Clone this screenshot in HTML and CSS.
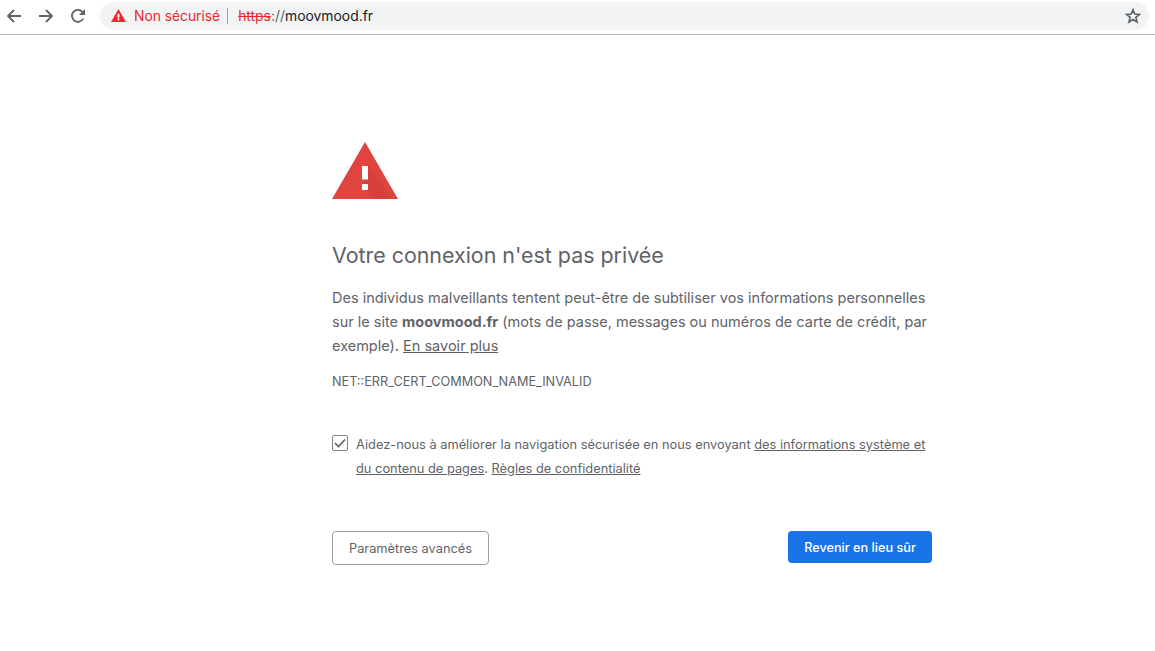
FILE: index.html
```html
<!DOCTYPE html>
<html lang="fr">
  <head>
    <meta charset="UTF-8" />
    <title>Erreur de confidentialité</title>
    <link rel="stylesheet" href="styles.css">
  </head>
  <body>
    <header class="toolbar">
      <button class="nav-btn" type="button" aria-label="Retour">
        <svg width="16" height="16" viewBox="0 0 16 16"><path d="M15 8H2M8 2 2 8l6 6" /></svg>
      </button>
      <button class="nav-btn" type="button" aria-label="Suivant">
        <svg width="16" height="16" viewBox="0 0 16 16"><path d="M1 8h13M8 2l6 6-6 6" /></svg>
      </button>
      <button class="nav-btn" type="button" aria-label="Actualiser">
        <svg width="16" height="16" viewBox="0 0 16 16"><path d="M13.2 10.6A6 6 0 1 1 12.4 3.8L14 5.4" /><path class="fill" d="M15 1v6H9z" /></svg>
      </button>
      <div class="omnibox">
        <svg class="warn-small" width="15" height="13" viewBox="0 0 16 14"><path d="M8 0 16 14H0z" fill="#e52b2b" /><path d="M7 5h2v4.400H7zM7 10.200h2v1.800H7z" fill="#fff" /></svg>
        <span class="not-secure">Non sécurisé</span>
        <span class="divider"></span>
        <span class="url"><s class="scheme">https</s><span class="sep">://</span>moovmood.fr</span>
        <svg class="star" width="16" height="16" viewBox="0 0 16 16"><path d="M8 1.800 9.800 6l4.600.4-3.500 3 1.100 4.500L8 11.500l-4 2.400 1.100-4.500-3.500-3L6.200 6z" /></svg>
      </div>
    </header>

    <main class="interstitial">
      <svg class="warn-big" width="66" height="58" viewBox="0 0 66 58">
        <path d="M33 0 66 57H0z" fill="#e0443e" />
        <path d="M36 22 59 57H44L31 45z" fill="#c93a35" opacity="0.4" />
        <path d="M30 24h6v13.500h-6zM30 42h6v6h-6z" fill="#fff" />
      </svg>

      <h1>Votre connexion n'est pas privée</h1>

      <p class="message">Des individus malveillants tentent peut-être de subtiliser vos informations personnelles sur le site <strong>moovmood.fr</strong> (mots de passe, messages ou numéros de carte de crédit, par exemple). <a href="#">En savoir plus</a></p>

      <div class="error-code">NET::ERR_CERT_COMMON_NAME_INVALID</div>

      <div class="opt-in">
        <span class="checkbox">
          <svg width="12" height="10" viewBox="0 0 12 10"><path d="M1 5l3.500 3.500L11 1.500" /></svg>
        </span>
        <p>
          Aidez-nous à améliorer la navigation sécurisée en nous envoyant
          <a href="#">des informations système et du contenu de pages</a>.
          <a href="#">Règles de confidentialité</a>
        </p>
      </div>

      <div class="actions">
        <button class="btn-advanced" type="button">Paramètres avancés</button>
        <button class="btn-back" type="button">Revenir en lieu sûr</button>
      </div>
    </main>
  </body>
</html>
```

FILE: styles.css
```css
* {
  margin: 0;
  padding: 0;
  box-sizing: border-box;
}

body {
  font-family: Inter, Roboto, "Liberation Sans", sans-serif;
  background-color: white;
  color: #5f6368;
}

.toolbar {
  height: 35px;
  display: flex;
  align-items: center;
  padding: 0 6px 3px 6px;
  border-bottom: 1px solid #b6b6b8;
}

.nav-btn {
  width: 16px;
  height: 16px;
  margin-right: 16px;
  border: none;
  background: none;
  display: flex;
}

.nav-btn:nth-child(3) {
  margin-right: 14px;
}

.nav-btn svg {
  fill: none;
  stroke: #5f6368;
  stroke-width: 1.8;
}

.nav-btn svg .fill {
  fill: #5f6368;
  stroke: none;
}

.omnibox {
  flex: 1;
  height: 28px;
  display: flex;
  align-items: center;
  padding: 0 8px 0 11px;
  background-color: #f1f3f4;
  border-radius: 14px;
  font-size: 13.8px;
}

.not-secure {
  margin-left: 8px;
  color: #e52b2b;
}

.divider {
  width: 1px;
  height: 16px;
  margin: 0 10px 0 7px;
  background-color: #9aa0a6;
}

.url {
  flex: 1;
  font-size: 13.9px;
  color: #202124;
}

.scheme {
  color: #e52b2b;
}

.sep {
  color: #5f6368;
}

.star {
  fill: none;
  stroke: #5f6368;
  stroke-width: 1.7;
}

.interstitial {
  width: 600px;
  margin-left: 332px;
  padding-top: 107px;
}

.warn-big {
  display: block;
}

h1 {
  margin-top: 41px;
  font-size: 21.4px;
  line-height: 28px;
  font-weight: 400;
  color: #5f6368;
}

.message {
  margin-top: 17px;
  font-size: 14.5px;
  line-height: 24px;
}

.message strong {
  font-weight: 700;
}

a {
  color: #5f6368;
}

.error-code {
  margin-top: 12px;
  font-size: 12.7px;
  line-height: 24px;
}

.opt-in {
  margin-top: 39px;
  display: flex;
  font-size: 12.84px;
  line-height: 24px;
}

.checkbox {
  flex: none;
  width: 16px;
  height: 16px;
  margin: 2px 8px 0 0;
  border: 1px solid #80868b;
  border-radius: 2px;
  display: flex;
  align-items: center;
  justify-content: center;
}

.checkbox svg {
  fill: none;
  stroke: #5f6368;
  stroke-width: 1.6;
}

.actions {
  margin-top: 50px;
  display: flex;
  justify-content: space-between;
  align-items: flex-start;
}

button {
  font-family: inherit;
}

.btn-advanced {
  width: 157px;
  height: 34px;
  background-color: white;
  color: #5f6368;
  border: 1px solid #9aa0a6;
  border-radius: 4px;
  font-size: 12.8px;
}

.btn-back {
  width: 144px;
  height: 32px;
  background-color: #1a73e8;
  color: white;
  border: none;
  border-radius: 4px;
  font-size: 12.7px;
  font-weight: 500;
}
```
